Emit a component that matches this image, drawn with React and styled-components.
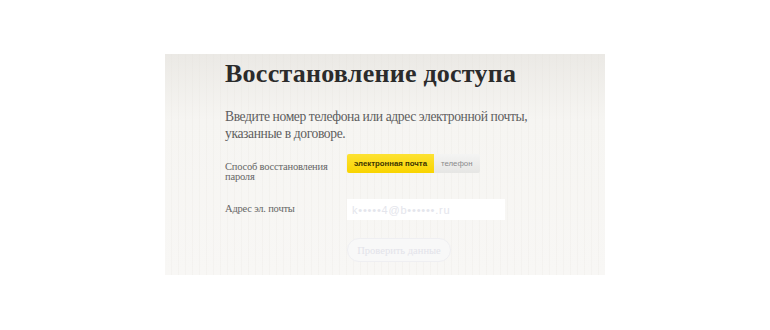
import React, { useState } from 'react'
import styled, { createGlobalStyle } from 'styled-components'

const GlobalStyle = createGlobalStyle`
    body {
        margin: 0;
        background: #fff;
        font-family: "Liberation Serif", serif;
    }
`

const Page = styled.div`
    width: 770px;
    height: 330px;
    padding: 54px 0 0 165px;
    box-sizing: border-box;
`

const Panel = styled.div`
    width: 440px;
    height: 221px;
    box-sizing: border-box;
    padding: 4px 0 0 60px;
    background:
        repeating-linear-gradient(90deg, rgba(255,255,255,0) 0 6px, rgba(225,222,216,0.18) 6px 7px),
        linear-gradient(180deg, #ebe9e5 0%, #f6f5f2 30%, #f8f7f5 100%);
`

const Title = styled.h1`
    margin: 0;
    font-family: "Liberation Serif", serif;
    font-weight: bold;
    font-size: 26px;
    line-height: 32px;
    color: #2b2b2b;
    letter-spacing: 0.25px;
`

const Lead = styled.p`
    margin: 18px 0 0;
    width: 330px;
    font-family: "Liberation Serif", serif;
    font-size: 13.6px;
    line-height: 17px;
    letter-spacing: -0.4px;
    color: #5e5e5e;
`

const Form = styled.div`
    display: grid;
    grid-template-columns: 122px auto;
    margin-top: 12px;
`

const Label = styled.div`
    font-family: "Liberation Serif", serif;
    font-size: 10.5px;
    line-height: 10px;
    letter-spacing: -0.2px;
    color: #666;
    padding-top: ${p => p.$top || 0}px;
`

const Field = styled.div`
    display: flex;
    height: ${p => p.$h}px;
`

const Toggle = styled.button`
    border: none;
    height: 19px;
    padding: 0 7px;
    font-family: "Liberation Sans", sans-serif;
    font-size: 7.8px;
    font-weight: ${p => (p.$active ? 'bold' : 'normal')};
    color: ${p => (p.$active ? '#3a3300' : '#8a8a8a')};
    background: ${p => (p.$active
        ? 'linear-gradient(180deg, #fde233 0%, #f9d400 100%)'
        : 'linear-gradient(180deg, #f4f4f3 0%, #e6e6e4 100%)')};
    border-radius: ${p => (p.$active ? '2px 0 0 2px' : '0 2px 2px 0')};
    cursor: pointer;
`

const Input = styled.input`
    width: 158px;
    height: 21px;
    box-sizing: border-box;
    border: none;
    background: #fff;
    padding: 0 5px;
    font-family: "Liberation Sans", sans-serif;
    font-size: 11px;
    letter-spacing: 0.8px;
    outline: none;

    &::placeholder {
        color: #e4e5ec;
    }
`

const Submit = styled.button`
    grid-column: 2;
    width: 104px;
    height: 24px;
    border: 1px solid #efeff2;
    border-radius: 12px;
    background: #f8f8f8;
    font-family: "Liberation Serif", serif;
    font-size: 10.5px;
    color: #e3e3ea;
    cursor: default;
`

export default function App() {
    const [mode, setMode] = useState('email')

    return (
        <>
            <GlobalStyle />
            <Page>
                <Panel>
                    <Title>Восстановление доступа</Title>
                    <Lead>Введите номер телефона или адрес электронной почты, указанные в договоре.</Lead>
                    <Form>
                        <Label $top={8}>Способ восстановления<br />пароля</Label>
                        <Field $h={45}>
                            <Toggle $active={mode === 'email'} onClick={() => setMode('email')}>электронная почта</Toggle>
                            <Toggle $active={mode === 'phone'} onClick={() => setMode('phone')}>телефон</Toggle>
                        </Field>
                        <Label $top={5}>Адрес эл. почты</Label>
                        <Field $h={39}>
                            <Input placeholder="k•••••4@b••••••.ru" />
                        </Field>
                        <Submit>Проверить данные</Submit>
                    </Form>
                </Panel>
            </Page>
        </>
    )
}
